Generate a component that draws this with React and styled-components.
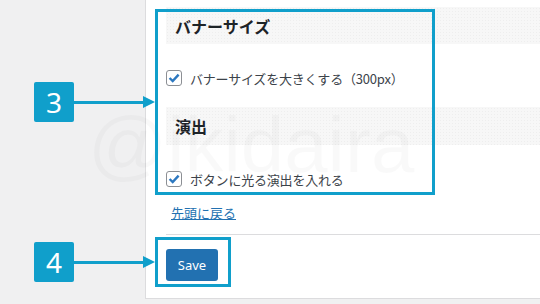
import React from 'react';
import styled, { createGlobalStyle } from 'styled-components';

const GlobalStyle = createGlobalStyle`
  html, body {
    margin: 0;
    padding: 0;
    background: #f0f0f1;
  }
  body {
    font-family: "Noto Sans CJK JP", "Noto Sans", sans-serif;
    overflow: hidden;
  }
`;

const ACCENT = '#109fcb';

const Page = styled.div`
  position: relative;
  display: flex;
  width: 540px;
  height: 304px;
  overflow: hidden;
  background: #f0f0f1;
`;

const Gutter = styled.div`
  width: 145px;
  flex-shrink: 0;
`;

const Panel = styled.div`
  flex: 1;
  height: 299px;
  box-sizing: border-box;
  background: #fff;
  border-left: 1px solid #dcdcde;
  border-bottom: 1px solid #dcdcde;
  padding: 7px 0 0 20px;
  display: flex;
  flex-direction: column;
`;

const SectionHeading = styled.h3`
  margin: ${(p) => p.$top || 0}px 0 0;
  height: ${(p) => p.$height}px;
  box-sizing: border-box;
  padding-left: 9px;
  display: flex;
  align-items: center;
  background-color: #f7f7f7;
  background-image: radial-gradient(#eeeeee 0.6px, transparent 0.6px);
  background-size: 3px 3px;
  font-size: 16px;
  font-weight: 700;
  color: #1d2327;
`;

const OptionRow = styled.label`
  margin-top: ${(p) => p.$top}px;
  display: flex;
  align-items: center;
  gap: 8px;
  height: 16px;
  font-size: 13px;
  color: #3c434a;
  letter-spacing: -0.2px;
`;

const CheckBox = styled.span`
  width: 16px;
  height: 16px;
  box-sizing: border-box;
  border: 1px solid #8c8f94;
  border-radius: 3px;
  background: #fff;
  display: flex;
  align-items: center;
  justify-content: center;
  flex-shrink: 0;
`;

const BackLink = styled.a`
  margin: 18px 0 0 5px;
  font-size: 13px;
  line-height: 16px;
  color: #2271b1;
  text-decoration: underline;
  align-self: flex-start;
`;

const Divider = styled.hr`
  margin: 13px 0 0;
  border: 0;
  border-top: 1px solid #dcdcde;
  height: 0;
`;

const SaveButton = styled.button`
  margin-top: 14px;
  align-self: flex-start;
  width: 52px;
  height: 32px;
  border: 0;
  border-radius: 3px;
  background: #2271b1;
  color: #fff;
  font-family: "Noto Sans", "Open Sans", sans-serif;
  font-size: 13px;
  padding: 0;
`;

const Highlight = styled.div`
  position: absolute;
  left: ${(p) => p.$x}px;
  top: ${(p) => p.$y}px;
  width: ${(p) => p.$w}px;
  height: ${(p) => p.$h}px;
  box-sizing: border-box;
  border: 3px solid ${ACCENT};
  pointer-events: none;
`;

const Callout = styled.div`
  position: absolute;
  left: 34px;
  top: ${(p) => p.$y}px;
  display: flex;
  align-items: center;
`;

const Badge = styled.div`
  width: 40px;
  height: 40px;
  border-radius: 2px;
  background: ${ACCENT};
  color: #fff;
  display: flex;
  align-items: center;
  justify-content: center;
  font-family: "Noto Sans", "Open Sans", sans-serif;
  font-size: 28px;
  line-height: 1;
`;

const ArrowLine = styled.div`
  width: 69px;
  height: 3px;
  background: ${ACCENT};
`;

const ArrowHead = styled.div`
  width: 0;
  height: 0;
  border-left: 12px solid ${ACCENT};
  border-top: 6px solid transparent;
  border-bottom: 6px solid transparent;
`;

const Watermark = styled.div`
  position: absolute;
  left: 88px;
  top: 100px;
  font-family: "Liberation Sans", sans-serif;
  font-size: 78px;
  color: rgba(0, 0, 0, 0.022);
  white-space: nowrap;
  pointer-events: none;
`;

const Check = () => (
  <svg width="12" height="12" viewBox="0 0 12 12">
    <path d="M1.6 6 L4.7 9.1 L10.6 2.6" fill="none" stroke="#2c78c0" strokeWidth="2.4" />
  </svg>
);

const Option = ({ top, children }) => (
  <OptionRow $top={top}>
    <CheckBox>
      <Check />
    </CheckBox>
    {children}
  </OptionRow>
);

const Pointer = ({ y, num }) => (
  <Callout $y={y}>
    <Badge>{num}</Badge>
    <ArrowLine />
    <ArrowHead />
  </Callout>
);

export default function App() {
  return (
    <>
      <GlobalStyle />
      <Page>
        <Gutter />
        <Panel>
          <SectionHeading $height={37}>バナーサイズ</SectionHeading>
          <Option top={26}>バナーサイズを大きくする（300px）</Option>
          <SectionHeading $top={21} $height={38}>演出</SectionHeading>
          <Option top={26}>ボタンに光る演出を入れる</Option>
          <BackLink href="#top">先頭に戻る</BackLink>
          <Divider />
          <SaveButton>Save</SaveButton>
        </Panel>
        <Watermark>@ikidaira</Watermark>
        <Highlight $x={155} $y={9} $w={280} $h={186} />
        <Highlight $x={155} $y={237} $w={76} $h={50} />
        <Pointer y={82} num="3" />
        <Pointer y={242} num="4" />
      </Page>
    </>
  );
}
